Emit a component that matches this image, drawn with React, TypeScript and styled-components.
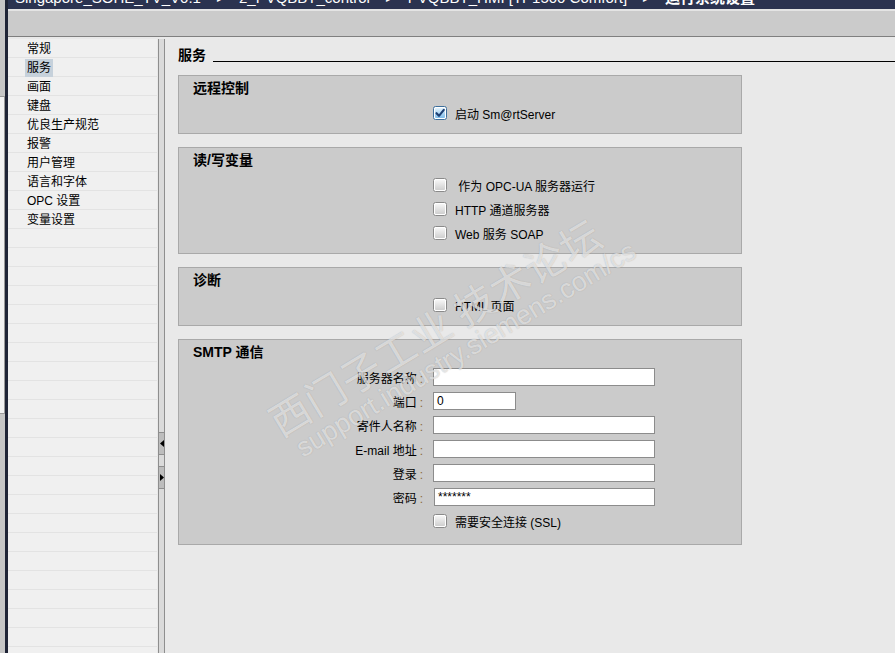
import React, { FC } from "react"
import styled, { createGlobalStyle } from "styled-components"

const GlobalStyle = createGlobalStyle`
    html, body {
        margin: 0;
        padding: 0;
        background: #e9e9e9;
    }
    * {
        box-sizing: border-box;
    }
`

const UI_FONT = `"Liberation Sans", "Noto Sans CJK SC", sans-serif`

const Screen = styled.div`
    position: relative;
    width: 895px;
    height: 653px;
    display: flex;
    flex-direction: row;
    overflow: hidden;
    font-family: ${UI_FONT};
    font-size: 12px;
    color: #000;
`

const LeftStrip = styled.div`
    width: 5px;
    background: #c6c6c6;
    display: flex;
    flex-direction: column;
`

const StripBox = styled.div`
    margin-top: 96px;
    height: 318px;
    background: #f2f2f2;
    border-top: 1px solid #9a9a9a;
    border-bottom: 1px solid #9a9a9a;
    border-right: 1px solid #9a9a9a;
`

const DarkStripe = styled.div`
    width: 3px;
    background: #1f2436;
`

const Main = styled.div`
    flex: 1;
    display: flex;
    flex-direction: column;
    min-width: 0;
`

const TitleBar = styled.div`
    height: 9px;
    background: #2b3350;
    overflow: hidden;
    padding-left: 7px;
`

const TitleText = styled.div`
    display: flex;
    align-items: center;
    gap: 16px;
    margin-top: -10px;
    line-height: 16px;
    font-size: 15px;
    color: #ffffff;
    white-space: nowrap;
`

const TitleSep = styled.span`
    font-size: 11px;
`

const TitleLast = styled.span`
    font-weight: bold;
`

const TitleGap = styled.div`
    height: 2px;
    background: #e4e4e4;
`

const Toolbar = styled.div`
    height: 26px;
    background: #cbcbcb;
    border-bottom: 1px solid #7f7f7f;
`

const Workspace = styled.div`
    flex: 1;
    display: flex;
    flex-direction: row;
    background: #e9e9e9;
    min-height: 0;
`

const NavList = styled.div`
    width: 149px;
    margin-top: 2px;
    background: #f0f0f0;
    display: flex;
    flex-direction: column;
    overflow: hidden;
`

const NavRow = styled.div`
    flex: none;
    height: 19px;
    border-bottom: 1px solid #e3e3e3;
    padding: 2px 0 0 17px;
    display: flex;
    align-items: center;
`

const NavLabel = styled.span<{ $selected?: boolean }>`
    padding: 0 2px;
    line-height: 18px;
    background: ${(p) => (p.$selected ? "#c6d1db" : "transparent")};
`

const Splitter = styled.div`
    width: 7px;
    margin: 2px 1px 0 1px;
    background: #dadada;
    border-left: 1px solid #8e8e8e;
    border-right: 1px solid #8e8e8e;
    display: flex;
    flex-direction: column;
`

const SplitButton = styled.div<{ $first?: boolean }>`
    margin-top: ${(p) => (p.$first ? "393px" : "11px")};
    height: 23px;
    background: #bdbdbd;
    border-top: 1px solid #8e8e8e;
    border-bottom: 1px solid #8e8e8e;
    display: flex;
    align-items: center;
    justify-content: center;
`

const Content = styled.div`
    flex: 1;
    padding: 9px 0 0 12px;
    display: flex;
    flex-direction: column;
    min-width: 0;
`

const Header = styled.div`
    display: flex;
    align-items: flex-end;
    margin-bottom: 11px;
`

const HeaderTitle = styled.div`
    font-size: 14px;
    font-weight: bold;
    line-height: 18px;
`

const HeaderRule = styled.div`
    flex: 1;
    height: 1px;
    background: #000;
    margin: 0 0 2px 7px;
`

const Panel = styled.div<{ $extraBottom?: number }>`
    width: 564px;
    background: #cbcbcb;
    border: 1px solid #a9a9a9;
    padding: 3px 0 ${(p) => 8 + (p.$extraBottom || 0)}px 14px;
    margin-bottom: 13px;
    display: flex;
    flex-direction: column;
`

const PanelTitle = styled.div`
    font-size: 14px;
    font-weight: bold;
    line-height: 18px;
    margin-bottom: 4px;
`

const OptionRow = styled.div`
    height: 24px;
    display: flex;
    align-items: center;
    padding-left: 240px;
    gap: 8px;
    white-space: pre;
`

const FieldRow = styled.div`
    height: 24px;
    display: flex;
    align-items: center;
`

const FieldLabel = styled.div`
    width: 240px;
    text-align: right;
    padding-right: 10px;
    white-space: nowrap;
`

const Colon = styled.span`
    color: #8a6a3c;
    margin-left: 3px;
`

const TextBox = styled.div<{ $width: number; $shift?: number }>`
    width: ${(p) => p.$width}px;
    height: 18px;
    margin-left: ${(p) => p.$shift || 0}px;
    background: #ffffff;
    border: 1px solid #8c8c8c;
    padding-left: 3px;
    display: flex;
    align-items: center;
    font-size: 12px;
`

const BoxFrame = styled.span`
    width: 14px;
    height: 14px;
    flex: none;
    display: inline-flex;
`

const Watermark = styled.div`
    position: absolute;
    left: 452px;
    top: 332px;
    transform: translate(-50%, -50%) rotate(-31deg);
    display: flex;
    flex-direction: column;
    align-items: center;
    pointer-events: none;
    color: rgba(255, 255, 255, 0.62);
    text-shadow: 0 0 1px rgba(100, 100, 100, 0.45);
    white-space: nowrap;
`

const WatermarkCn = styled.div`
    font-family: "Noto Sans CJK SC", sans-serif;
    font-size: 40px;
    line-height: 44px;
    letter-spacing: 1px;
    margin-left: -24px;
`

const WatermarkUrl = styled.div`
    font-family: "Liberation Sans", sans-serif;
    font-size: 27px;
    line-height: 28px;
    margin-left: 6px;
`

const CheckBox: FC<{ checked?: boolean }> = ({ checked }) => (
    <BoxFrame>
        <svg width="14" height="14" viewBox="0 0 14 14">
            <defs>
                <linearGradient id="cbOff" x1="0" y1="0" x2="0" y2="1">
                    <stop offset="0" stopColor="#f6f6f6" />
                    <stop offset="1" stopColor="#cfcfcf" />
                </linearGradient>
                <linearGradient id="cbOn" x1="0" y1="0" x2="0" y2="1">
                    <stop offset="0" stopColor="#e4f3fd" />
                    <stop offset="1" stopColor="#7fbce9" />
                </linearGradient>
            </defs>
            <rect x="0.5" y="0.5" width="13" height="13" rx="2" fill="#ffffff" stroke={checked ? "#3d6f9c" : "#8a8a8a"} />
            <rect x="2" y="2" width="10" height="10" rx="1" fill={checked ? "url(#cbOn)" : "url(#cbOff)"} />
            {checked && (
                <path d="M3.5 7.2 L6 9.8 L10.8 3.8" fill="none" stroke="#1d3f73" strokeWidth="2.1" strokeLinecap="round" strokeLinejoin="round" />
            )}
        </svg>
    </BoxFrame>
)

const Option: FC<{ label: string; checked?: boolean }> = ({ label, checked }) => (
    <OptionRow>
        <CheckBox checked={checked} />
        <span>{label}</span>
    </OptionRow>
)

const Field: FC<{ label: string; value?: string; width?: number; shift?: number }> = ({
    label, value, width, shift,
}) => (
    <FieldRow>
        <FieldLabel>
            {label}
            <Colon>:</Colon>
        </FieldLabel>
        <TextBox $width={width || 222} $shift={shift}>{value}</TextBox>
    </FieldRow>
)

const navItems = ["常规", "服务", "画面", "键盘", "优良生产规范", "报警", "用户管理", "语言和字体", "OPC 设置", "变量设置"]

const App: FC = () => (
    <>
        <GlobalStyle />
        <Screen>
            <LeftStrip>
                <StripBox />
            </LeftStrip>
            <DarkStripe />
            <Main>
                <TitleBar>
                    <TitleText>
                        <span>Singapore_SOHE_TV_V0.1</span>
                        <TitleSep>▸</TitleSep>
                        <span>2_PVQBBT_control</span>
                        <TitleSep>▸</TitleSep>
                        <span>PVQBBT_HMI [TP1500 Comfort]</span>
                        <TitleSep>▸</TitleSep>
                        <TitleLast>运行系统设置</TitleLast>
                    </TitleText>
                </TitleBar>
                <TitleGap />
                <Toolbar />
                <Workspace>
                    <NavList>
                        {navItems.map((item) => (
                            <NavRow key={item}>
                                <NavLabel $selected={item === "服务"}>{item}</NavLabel>
                            </NavRow>
                        ))}
                        {Array.from({ length: 24 }).map((_, i) => (
                            <NavRow key={`empty-${i}`} />
                        ))}
                    </NavList>
                    <Splitter>
                        <SplitButton $first>
                            <svg width="4" height="7" viewBox="0 0 4 7">
                                <path d="M4 0 L0 3.5 L4 7 Z" fill="#000" />
                            </svg>
                        </SplitButton>
                        <SplitButton>
                            <svg width="4" height="7" viewBox="0 0 4 7">
                                <path d="M0 0 L4 3.5 L0 7 Z" fill="#000" />
                            </svg>
                        </SplitButton>
                    </Splitter>
                    <Content>
                        <Header>
                            <HeaderTitle>服务</HeaderTitle>
                            <HeaderRule />
                        </Header>
                        <Panel>
                            <PanelTitle>远程控制</PanelTitle>
                            <Option label="启动 Sm@rtServer" checked />
                        </Panel>
                        <Panel>
                            <PanelTitle>读/写变量</PanelTitle>
                            <Option label=" 作为 OPC-UA 服务器运行" />
                            <Option label="HTTP 通道服务器" />
                            <Option label="Web 服务 SOAP" />
                        </Panel>
                        <Panel>
                            <PanelTitle>诊断</PanelTitle>
                            <Option label="HTML 页面" />
                        </Panel>
                        <Panel $extraBottom={3}>
                            <PanelTitle>SMTP 通信</PanelTitle>
                            <Field label="服务器名称" />
                            <Field label="端口" value="0" width={83} />
                            <Field label="寄件人名称" />
                            <Field label="E-mail 地址" />
                            <Field label="登录" />
                            <Field label="密码" value="*******" width={221} shift={1} />
                            <Option label="需要安全连接 (SSL)" />
                        </Panel>
                    </Content>
                </Workspace>
            </Main>
            <Watermark>
                <WatermarkCn>西门子工业 技术论坛</WatermarkCn>
                <WatermarkUrl>support.industry.siemens.com/cs</WatermarkUrl>
            </Watermark>
        </Screen>
    </>
)

export default App
